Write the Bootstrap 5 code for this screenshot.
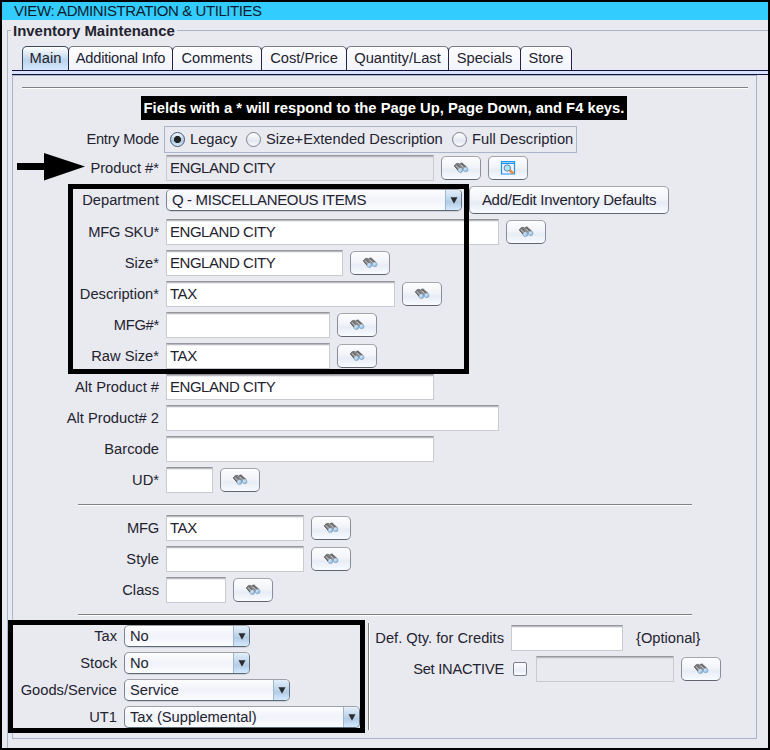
<!DOCTYPE html>
<html lang="en">
<head>
<meta charset="utf-8">
<title>Inventory Maintenance</title>
<link href="https://cdn.jsdelivr.net/npm/bootstrap@5.3.0/dist/css/bootstrap.min.css" rel="stylesheet">
<style>
*{box-sizing:border-box}
body{margin:0;width:770px;height:750px;overflow:hidden;background:#e9eaef;color:#23232f;font-family:"Liberation Sans",Arial,sans-serif;font-size:14.7px;line-height:18px}
.app-window{width:770px;height:750px;border:2px solid #000;background:#e9eaef}
.view-bar{height:18px;background:#3cf;color:#0c1c2c;padding-left:12px;line-height:18px;font-size:15px;letter-spacing:-.42px}
.group-frame{margin:10px 0 0 5px;height:718px;border-left:1px solid #aab5ca;border-top:1px solid #aab5ca}
.group-title{margin:-9px 0 0 3px;width:max-content;background:#e9eaef;padding:0 2px 0 2px;font-weight:bold;font-size:14.95px;height:18px;line-height:17px}
.tab-strip{height:24px;margin:6px 0 0 14px;flex-wrap:nowrap;border:0}
.tab-strip .nav-link{height:24px;padding:0;line-height:23px;text-align:center;color:#23232f;border:1px solid #7b7d85;border-right-color:#26234d;border-left-color:#26234d;border-bottom:0;border-radius:5px 5px 0 0;background:linear-gradient(#fdfdff,#f2f4fb);margin:0 -1px 0 0;white-space:nowrap}
.tab-strip .nav-link.active{color:#23232f;background:linear-gradient(#fff,#c6dbee 50%,#bdd4ea 60%,#d3e9ff);border-color:#3a4a66}
.tab-line{height:5px;margin-left:4px;border-top:1px solid #14103f;border-bottom:1px solid #14103f;background:#d8e2f8}
.main-panel{margin-left:4px;width:745px;height:664px;border:1px solid #aab5ca}
.sep{height:2px;background:#808084;border-bottom:1px solid #fff;flex:none}
.hint{width:486px;height:24px;margin:7px 0 0 128px;background:#000;color:#fff;font-weight:bold;line-height:24px;text-align:center;white-space:nowrap;font-size:14.77px}
.lbl{text-align:right;white-space:nowrap;flex:none;width:146px;margin-right:7px}
.caps{letter-spacing:-.25px}
.frow{height:26px;margin-bottom:5px;display:flex;align-items:center}
.field{height:26px;flex:none;background:#fff;border:1px solid #c9cacf;border-top:1px solid #97989d;border-radius:0;box-shadow:inset 0 1px #b9babf,inset 0 2px #ececf0;padding:0 0 0 3px;line-height:23px;font-size:15px;letter-spacing:-.46px;color:#23232f;white-space:nowrap}
.field.locked{background:#e9eaef;box-shadow:inset 0 1px #b9babf,inset 0 2px #dcdde2}
.tool{width:40px;height:24px;padding:0;margin-left:7px;flex:none;display:flex;align-items:center;justify-content:center;border:1px solid;border-color:#a5a7af #8b8e97 #62656f;border-radius:5px;background:linear-gradient(#fdfdff,#f2f4f9 45%,#e8ecf5 60%,#f8fbff);color:#23232f}
.wide-btn{width:200px;height:28px;font-size:15px;letter-spacing:-.28px}
.combo{height:22px;flex:none;display:flex;border:1px solid;border-color:#9ea1aa #5e7083 #5c6874 #7f838c;border-radius:5px;background:linear-gradient(#fdfdff,#f1f3fa 50%,#fbfdff);line-height:20px;padding-left:5px;overflow:hidden;justify-content:space-between;white-space:nowrap;box-shadow:0 1px #cfd1d8}
.combo i{width:16px;height:20px;border-left:1px solid #9fb6cc;background:linear-gradient(#e4eff9,#bfd6eb 45%,#b3cce4 60%,#d4eaff);display:flex;align-items:center;justify-content:center;flex:none}
.radios{height:27px;width:413px;margin-left:-2px;border:1px solid #aab5ca;display:flex;align-items:center;padding:0 0 1px 5px;white-space:nowrap}
.dot{width:15px;height:15px;border-radius:50%;border:1px solid #7c808a;background:linear-gradient(#fff,#e3e7f0 60%,#fbfdff);flex:none}
.dot.on{border-color:#44566b;background:radial-gradient(circle,#222 0 3.2px,transparent 3.9px),linear-gradient(#f4f9fd,#afc8df 60%,#d6ecff)}
.combos{width:355px}
.combos .lbl{width:104px}
.combos .duo{display:flex;align-items:center;height:22px;margin-bottom:5px}
.vline{width:2px;height:107px;background:#808084;border-right:1px solid #fff;margin-top:-2px}
.tick{width:14px;height:14px;border:1px solid #7c808a;border-radius:2px;background:linear-gradient(#fff,#e9edf5 60%,#fafcff)}
.callout-box{position:absolute;border:5px solid #000}
.pointer{position:absolute;left:17px;top:153px}
</style>
<script src="https://cdn.jsdelivr.net/npm/bootstrap@5.3.0/dist/js/bootstrap.bundle.min.js"></script>
</head>
<body>
<svg width="0" height="0" class="position-absolute">
<defs>
<linearGradient id="lens" x1="0" y1="0" x2="1" y2="1"><stop offset="0" stop-color="#fff"/><stop offset=".9" stop-color="#72b4ee"/></linearGradient>
<symbol id="bino" viewBox="0 0 16 12">
<path d="M1 4 3 1.8 5 1.2 6.5 2 8 .9 10 1.3 14.2 5 12 8.500 8.5 8 5 9Z" fill="#8b8b8d"/>
<path d="M1.4 3.8 5.2 8.3M3.3 1.8 7.3 5.8M8 1.2 13 5.2" stroke="#505053" stroke-width=".9" fill="none"/>
<path d="M3 3.6 6.4 6.8M8 3 10.6 5.6" stroke="#c4c4c4" stroke-width=".9" fill="none"/>
<path d="M1 4 3 2 5 1.2 6.500 2 8 1 10 1.300" stroke="#666" stroke-width=".8" fill="none"/>
<circle cx="7.4" cy="8.2" r="2.4" fill="url(#lens)" stroke="#8294a5" stroke-width=".6"/>
<circle cx="12.7" cy="7.4" r="2.3" fill="url(#lens)" stroke="#8294a5" stroke-width=".6"/>
</symbol>
<symbol id="tri" viewBox="0 0 8 7"><path d="M.5.3h7L4 6.8z" fill="#2c2c30"/></symbol>
</defs>
</svg>
<div class="app-window">
<div class="view-bar">VIEW: ADMINISTRATION &amp; UTILITIES</div>
<div class="group-frame">
<div class="group-title">Inventory Maintenance</div>
<nav class="nav nav-tabs tab-strip">
<a class="nav-link active" style="width:47px">Main</a>
<a class="nav-link caps" style="width:105px">Additional Info</a>
<a class="nav-link" style="width:90px">Comments</a>
<a class="nav-link" style="width:86px">Cost/Price</a>
<a class="nav-link" style="width:103px">Quantity/Last</a>
<a class="nav-link" style="width:73px">Specials</a>
<a class="nav-link" style="width:52px">Store</a>
</nav>
<div class="tab-line"></div>
<main class="main-panel">
<div class="sep" style="width:726px;margin:11px 0 0 9px"></div>
<div class="hint">Fields with a * will respond to the Page Up, Page Down, and F4 keys.</div>
<div class="frow" style="margin:6px 0 2px;height:27px"><span class="lbl caps" style="padding-bottom:2px">Entry Mode</span>
<div class="radios"><span class="dot on"></span><span style="width:61px;padding-left:5px">Legacy</span><span class="dot"></span><span style="width:191px;padding-left:5px">Size+Extended Description</span><span class="dot"></span><span style="padding-left:5px">Full Description</span></div></div>
<div class="frow"><span class="lbl">Product #*</span><div class="field locked" style="width:268px">ENGLAND CITY</div>
<button class="btn tool"><svg width="16" height="12"><use href="#bino"/></svg></button>
<button class="btn tool"><svg width="16" height="16" viewBox="0 0 16 16"><path d="M1.5 1.5h13v12.5h-13z" fill="#f0f0ff" stroke="#1b94f2" stroke-width="1.2"/><path d="M1 1h14v3H1z" fill="#1b94f2"/><path d="M2 2.5h12" stroke="#9bd3ff"/><path d="m9.5 10 3.8 3.5" stroke="#ef8a35" stroke-width="2.4"/><circle cx="7.3" cy="8" r="3.2" fill="#a9e6f8" stroke="#6687a0"/></svg></button></div>
<div class="frow" style="height:28px"><span class="lbl">Department</span><div class="combo" style="width:296px"><span style="font-size:15px;letter-spacing:-.37px">Q - MISCELLANEOUS ITEMS</span><i><svg width="8" height="7"><use href="#tri"/></svg></i></div><button class="btn tool wide-btn">Add/Edit Inventory Defaults</button></div>
<div class="frow"><span class="lbl caps">MFG SKU*</span><div class="field" style="width:333px">ENGLAND CITY</div><button class="btn tool"><svg width="16" height="12"><use href="#bino"/></svg></button></div>
<div class="frow"><span class="lbl">Size*</span><div class="field" style="width:177px">ENGLAND CITY</div><button class="btn tool"><svg width="16" height="12"><use href="#bino"/></svg></button></div>
<div class="frow"><span class="lbl">Description*</span><div class="field" style="width:229px">TAX</div><button class="btn tool"><svg width="16" height="12"><use href="#bino"/></svg></button></div>
<div class="frow"><span class="lbl caps">MFG#*</span><div class="field" style="width:164px"></div><button class="btn tool"><svg width="16" height="12"><use href="#bino"/></svg></button></div>
<div class="frow"><span class="lbl">Raw Size*</span><div class="field" style="width:164px">TAX</div><button class="btn tool"><svg width="16" height="12"><use href="#bino"/></svg></button></div>
<div class="frow"><span class="lbl">Alt Product #</span><div class="field" style="width:268px">ENGLAND CITY</div></div>
<div class="frow"><span class="lbl">Alt Product# 2</span><div class="field" style="width:333px"></div></div>
<div class="frow"><span class="lbl">Barcode</span><div class="field" style="width:268px"></div></div>
<div class="frow"><span class="lbl">UD*</span><div class="field" style="width:47px"></div><button class="btn tool"><svg width="16" height="12"><use href="#bino"/></svg></button></div>
<div class="sep" style="width:614px;margin:11px 0 9px 65px"></div>
<div class="frow"><span class="lbl caps">MFG</span><div class="field" style="width:138px">TAX</div><button class="btn tool"><svg width="16" height="12"><use href="#bino"/></svg></button></div>
<div class="frow"><span class="lbl">Style</span><div class="field" style="width:138px"></div><button class="btn tool"><svg width="16" height="12"><use href="#bino"/></svg></button></div>
<div class="frow"><span class="lbl">Class</span><div class="field" style="width:60px"></div><button class="btn tool"><svg width="16" height="12"><use href="#bino"/></svg></button></div>
<div class="sep" style="width:614px;margin:11px 0 9px 65px"></div>
<div class="d-flex align-items-start">
<div class="combos">
<div class="duo"><span class="lbl">Tax</span><div class="combo" style="width:126px"><span>No</span><i><svg width="8" height="7"><use href="#tri"/></svg></i></div></div>
<div class="duo"><span class="lbl">Stock</span><div class="combo" style="width:126px"><span>No</span><i><svg width="8" height="7"><use href="#tri"/></svg></i></div></div>
<div class="duo"><span class="lbl">Goods/Service</span><div class="combo" style="width:166px"><span>Service</span><i><svg width="8" height="7"><use href="#tri"/></svg></i></div></div>
<div class="duo"><span class="lbl">UT1</span><div class="combo" style="width:236px"><span>Tax (Supplemental)</span><i><svg width="8" height="7"><use href="#tri"/></svg></i></div></div>
</div>
<div class="vline"></div>
<div>
<div class="frow"><span class="lbl" style="width:134px">Def. Qty. for Credits</span><div class="field" style="width:112px"></div><span style="margin-left:13px">{Optional}</span></div>
<div class="frow"><span class="lbl caps" style="width:134px;margin-right:9px">Set INACTIVE</span><span class="tick"></span><div class="field locked" style="width:138px;margin-left:9px"></div><button class="btn tool"><svg width="16" height="12"><use href="#bino"/></svg></button></div>
</div>
</div>
</main>
</div>
</div>
<div class="callout-box" style="left:68px;top:184px;width:401px;height:190px"></div>
<div class="callout-box" style="left:8px;top:620px;width:357px;height:113px"></div>
<svg class="pointer" width="68" height="28"><path d="M0 10h27V0l41 13.5L27 27.500V17H0z"/></svg>
</body>
</html>
